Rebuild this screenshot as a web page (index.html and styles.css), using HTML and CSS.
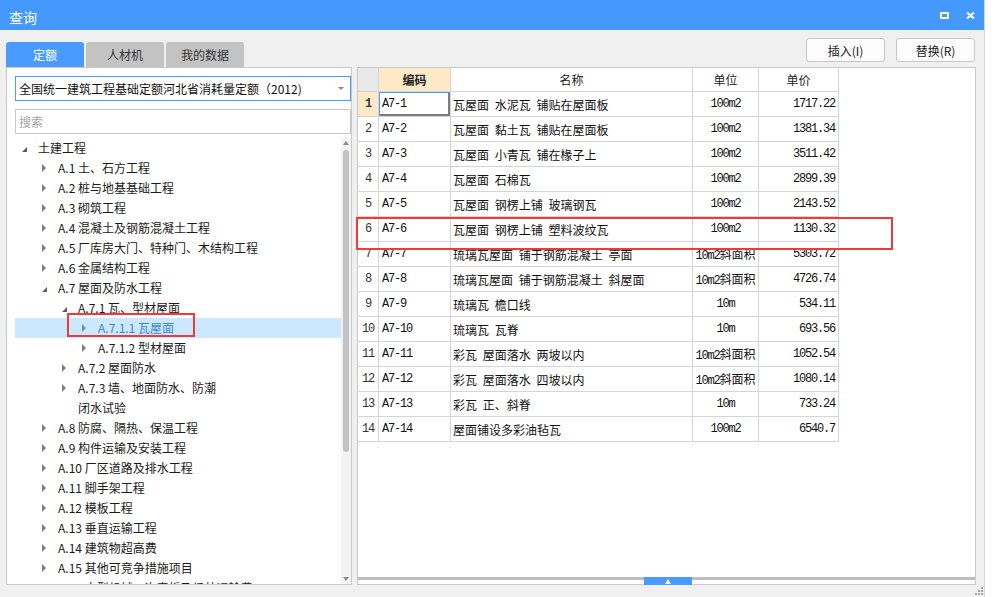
FILE: index.html
```html
<!DOCTYPE html>
<html lang="zh-CN">
<head>
<meta charset="utf-8">
<title>查询</title>
<link rel="stylesheet" href="styles.css">
</head>
<body>
<div class="win">
  <div class="titlebar">
    <span class="title">查询</span>
    <div class="tb-icons">
      <svg class="tb-ico" width="9" height="7" viewBox="0 0 9 7"><rect x="1" y="1" width="7" height="5" fill="none" stroke="#fff" stroke-width="2"/></svg>
      <svg class="tb-ico" width="9" height="7" viewBox="0 0 9 7"><path d="M1 0.5 L8 6.5 M8 0.5 L1 6.5" stroke="#fff" stroke-width="2"/></svg>
    </div>
  </div>

  <div class="main">
    <div class="left">
      <div class="tabs">
        <div class="tab active">定额</div>
        <div class="tab">人材机</div>
        <div class="tab">我的数据</div>
      </div>
      <div class="lpanel">
        <div class="select"><span>全国统一建筑工程基础定额河北省消耗量定额（2012)</span><i class="caret"></i></div>
        <div class="search">搜索</div>
        <div class="treewrap">
          <div class="tree">
            <div class="row l0 open"><i class="tw"></i><span>土建工程</span></div>
            <div class="row l1"><i class="tw"></i><span>A.1 土、石方工程</span></div>
            <div class="row l1"><i class="tw"></i><span>A.2 桩与地基基础工程</span></div>
            <div class="row l1"><i class="tw"></i><span>A.3 砌筑工程</span></div>
            <div class="row l1"><i class="tw"></i><span>A.4 混凝土及钢筋混凝土工程</span></div>
            <div class="row l1"><i class="tw"></i><span>A.5 厂库房大门、特种门、木结构工程</span></div>
            <div class="row l1"><i class="tw"></i><span>A.6 金属结构工程</span></div>
            <div class="row l1 open"><i class="tw"></i><span>A.7 屋面及防水工程</span></div>
            <div class="row l2 open"><i class="tw"></i><span>A.7.1 瓦、型材屋面</span></div>
            <div class="row l3 sel"><i class="tw"></i><span>A.7.1.1 瓦屋面</span></div>
            <div class="row l3"><i class="tw"></i><span>A.7.1.2 型材屋面</span></div>
            <div class="row l2"><i class="tw"></i><span>A.7.2 屋面防水</span></div>
            <div class="row l2 wrap"><i class="tw"></i><span>A.7.3 墙、地面防水、防潮<br>闭水试验</span></div>
            <div class="row l1"><i class="tw"></i><span>A.8 防腐、隔热、保温工程</span></div>
            <div class="row l1"><i class="tw"></i><span>A.9 构件运输及安装工程</span></div>
            <div class="row l1"><i class="tw"></i><span>A.10 厂区道路及排水工程</span></div>
            <div class="row l1"><i class="tw"></i><span>A.11 脚手架工程</span></div>
            <div class="row l1"><i class="tw"></i><span>A.12 模板工程</span></div>
            <div class="row l1"><i class="tw"></i><span>A.13 垂直运输工程</span></div>
            <div class="row l1"><i class="tw"></i><span>A.14 建筑物超高费</span></div>
            <div class="row l1"><i class="tw"></i><span>A.15 其他可竞争措施项目</span></div>
            <div class="row l1"><i class="tw"></i><span>A.16 大型机械一次安拆及场外运输费</span></div>
          </div>
          <div class="vscroll">
            <i class="arr-up"></i>
            <div class="thumb"></div>
            <i class="arr-down"></i>
          </div>
          <div class="redbox-tree"></div>
        </div>
      </div>
    </div>

    <div class="right">
      <div class="btnbar">
        <button class="btn">插入(I)</button>
        <button class="btn">替换(R)</button>
      </div>
      <div class="rpanel">
        <div class="grid-area">
          <div class="gt">
            <div class="c hd corner"></div>
            <div class="c hd act">编码</div>
            <div class="c hd">名称</div>
            <div class="c hd">单位</div>
            <div class="c hd">单价</div>

            <div class="c rn act">1</div><div class="c code focus">A7-1</div><div class="c name">瓦屋面 水泥瓦 铺贴在屋面板</div><div class="c unit"><span>100m2</span></div><div class="c price">1717.22</div>
            <div class="c rn">2</div><div class="c code">A7-2</div><div class="c name">瓦屋面 黏土瓦 铺贴在屋面板</div><div class="c unit"><span>100m2</span></div><div class="c price">1381.34</div>
            <div class="c rn">3</div><div class="c code">A7-3</div><div class="c name">瓦屋面 小青瓦 铺在椽子上</div><div class="c unit"><span>100m2</span></div><div class="c price">3511.42</div>
            <div class="c rn">4</div><div class="c code">A7-4</div><div class="c name">瓦屋面 石棉瓦</div><div class="c unit"><span>100m2</span></div><div class="c price">2899.39</div>
            <div class="c rn">5</div><div class="c code">A7-5</div><div class="c name">瓦屋面 钢楞上铺 玻璃钢瓦</div><div class="c unit"><span>100m2</span></div><div class="c price">2143.52</div>
            <div class="c rn">6</div><div class="c code">A7-6</div><div class="c name">瓦屋面 钢楞上铺 塑料波纹瓦</div><div class="c unit"><span>100m2</span></div><div class="c price">1130.32</div>
            <div class="c rn">7</div><div class="c code">A7-7</div><div class="c name">琉璃瓦屋面 铺于钢筋混凝土 亭面</div><div class="c unit"><span>10m2<span class="cj">斜面积</span></span></div><div class="c price">5303.72</div>
            <div class="c rn">8</div><div class="c code">A7-8</div><div class="c name">琉璃瓦屋面 铺于钢筋混凝土 斜屋面</div><div class="c unit"><span>10m2<span class="cj">斜面积</span></span></div><div class="c price">4726.74</div>
            <div class="c rn">9</div><div class="c code">A7-9</div><div class="c name">琉璃瓦 檐口线</div><div class="c unit"><span>10m</span></div><div class="c price">534.11</div>
            <div class="c rn">10</div><div class="c code">A7-10</div><div class="c name">琉璃瓦 瓦脊</div><div class="c unit"><span>10m</span></div><div class="c price">693.56</div>
            <div class="c rn">11</div><div class="c code">A7-11</div><div class="c name">彩瓦 屋面落水 两坡以内</div><div class="c unit"><span>10m2<span class="cj">斜面积</span></span></div><div class="c price">1052.54</div>
            <div class="c rn">12</div><div class="c code">A7-12</div><div class="c name">彩瓦 屋面落水 四坡以内</div><div class="c unit"><span>10m2<span class="cj">斜面积</span></span></div><div class="c price">1080.14</div>
            <div class="c rn">13</div><div class="c code">A7-13</div><div class="c name">彩瓦 正、斜脊</div><div class="c unit"><span>10m</span></div><div class="c price">733.24</div>
            <div class="c rn">14</div><div class="c code">A7-14</div><div class="c name">屋面铺设多彩油毡瓦</div><div class="c unit"><span>100m2</span></div><div class="c price">6540.7</div>
          </div>
        </div>
        <div class="hbar"><div class="handle"><i class="handle-arr"></i></div></div>
        <div class="hbar-foot"></div>
        <div class="redbox-row"></div>
      </div>
    </div>
  </div>

  <svg class="grip" width="8" height="8" viewBox="0 0 8 8">
    <rect x="6" y="0" width="2" height="2" fill="#a6a6a6"/>
    <rect x="3" y="3" width="2" height="2" fill="#a6a6a6"/>
    <rect x="6" y="3" width="2" height="2" fill="#a6a6a6"/>
    <rect x="0" y="6" width="2" height="2" fill="#a6a6a6"/>
    <rect x="3" y="6" width="2" height="2" fill="#a6a6a6"/>
    <rect x="6" y="6" width="2" height="2" fill="#a6a6a6"/>
  </svg>
</div>
</body>
</html>
```

FILE: styles.css
```css
* { box-sizing: border-box; }
html, body { margin: 0; padding: 0; background: #ffffff; }
body {
  font-family: "Noto Sans CJK SC", "Noto Sans", sans-serif;
  font-size: 12px;
  color: #1e1e1e;
}

.win {
  width: 985px;
  height: 597px;
  background: #f0f0f0;
  position: relative;
  overflow: hidden;
  border-right: 1px solid #d6d6d6;
}

/* title bar */
.titlebar {
  height: 30px;
  background: #4499fe;
  color: #fff;
  display: flex;
  align-items: center;
  padding: 0 9px 0 9px;
}
.title { font-size: 14px; line-height: 30px; padding-top: 3px; }
.tb-icons { margin-left: auto; display: flex; align-items: center; gap: 17px; padding-top: 1px; }
.tb-ico { display: block; }

/* layout */
.main { display: flex; padding-left: 6px; }
.left { width: 346px; display: flex; flex-direction: column; }
.right { width: 619px; margin-left: 5px; display: flex; flex-direction: column; }

/* tabs */
.tabs { display: flex; gap: 2px; margin-top: 12px; height: 25px; }
.tab {
  width: 78px; height: 25px;
  border-radius: 3px 3px 0 0;
  background: #c3c3c3;
  color: #333;
  display: flex; align-items: center; justify-content: center;
  font-size: 12px;
}
.tab.active { background: #4a9bff; color: #fff; }

/* left panel */
.lpanel {
  height: 518px;
  background: #fff;
  border: 1px solid #c9c9c9;
  padding: 8px 0 0 8px;
  display: flex; flex-direction: column;
}
.select {
  height: 25px;
  border: 1px solid #4a9bff;
  display: flex; align-items: center;
  padding-left: 3px;
  color: #111;
  white-space: nowrap;
}
.caret {
  margin-left: auto; margin-right: 6px;
  width: 0; height: 0;
  border-top: 3px solid #8a8a8a;
  border-left: 3px solid transparent;
  border-right: 3px solid transparent;
}
.search {
  height: 25px;
  margin-top: 8px;
  border: 1px solid #c8c8c8;
  color: #a3a3a3;
  padding-left: 3px;
  display: flex; align-items: center;
}

.treewrap { margin-top: 4px; flex: 1; display: flex; position: relative; overflow: hidden; }
.tree { flex: 1; overflow: hidden; }
.row {
  height: 20px; line-height: 20px;
  display: flex; align-items: flex-start;
  white-space: nowrap;
  color: #1a1a1a;
}
.row.l1 { padding-left: 20px; }
.row.l2 { padding-left: 40px; }
.row.l3 { padding-left: 60px; }
.row.wrap { height: 40px; }
.row.sel { background: #cce8ff; color: #3b84d8; }
.tw { width: 23px; height: 20px; flex: none; position: relative; }
.tw::before {
  content: ""; position: absolute; left: 7px; top: 6px;
  width: 0; height: 0;
  border-left: 4px solid #7f7f7f;
  border-top: 4px solid transparent;
  border-bottom: 4px solid transparent;
}
.row.open .tw::before {
  left: 7px; top: 9px;
  border-top: 0;
  border-left: 5px solid transparent;
  border-bottom: 5px solid #5e5e5e;
}
.row.sel .tw::before { border-left-color: #6f8fb0; }

.vscroll {
  width: 10px; flex: none;
  background: #f3f3f3;
  display: flex; flex-direction: column; align-items: center;
}
.arr-up {
  margin-top: 3px;
  width: 0; height: 0;
  border-bottom: 4px solid #8a8a8a;
  border-left: 3.5px solid transparent;
  border-right: 3.5px solid transparent;
}
.thumb { margin-top: 5px; width: 6px; height: 302px; border-radius: 3px; background: #c2c2c2; }
.arr-down {
  margin-top: auto; margin-bottom: 3px;
  width: 0; height: 0;
  border-top: 4px solid #8a8a8a;
  border-left: 3.5px solid transparent;
  border-right: 3.5px solid transparent;
}
.redbox-tree {
  position: absolute; left: 52px; top: 175px;
  width: 128px; height: 24px;
  border: 2px solid #ee3a3a;
  pointer-events: none;
}

/* right side */
.btnbar { display: flex; justify-content: flex-end; gap: 11px; padding-top: 8px; padding-right: 1px; height: 37px; }
.btn {
  width: 79px; height: 24px;
  border: 1px solid #c6c6c6; border-radius: 3px;
  background: #fcfcfc;
  font-family: inherit; font-size: 12px; color: #222;
  padding: 0;
}

.rpanel {
  height: 518px;
  border: 1px solid #c9c9c9;
  background: #fff;
  position: relative;
  display: flex; flex-direction: column;
}
.grid-area { flex: 1; }
.hbar { height: 3px; background: #bdbdbd; position: relative; }
.handle {
  position: absolute; left: 286px; top: 0;
  width: 48px; height: 8px;
  background: #4a9bff;
  display: flex; align-items: center; justify-content: center;
}
.handle-arr {
  width: 0; height: 0;
  border-bottom: 5px solid #fff;
  border-left: 3px solid transparent;
  border-right: 3px solid transparent;
}
.hbar-foot { height: 4px; }
.redbox-row {
  position: absolute; left: -2px; top: 149px;
  width: 537px; height: 33px;
  border: 2px solid #f03a3a;
  pointer-events: none;
}

/* grid table */
.gt {
  display: grid;
  grid-template-columns: 21px 72px 242px 66px 80px;
  grid-template-rows: 24px;
  grid-auto-rows: 25px;
  width: 481px;
}
.c {
  border-right: 1px solid #d5d5d5;
  border-bottom: 1px solid #d5d5d5;
  display: flex; align-items: center;
  white-space: nowrap; overflow: hidden;
  color: #111;
}
.hd { justify-content: center; font-size: 12px; color: #222; }
.hd.corner { background: #e9e9e9; }
.hd.act { background: #fde8c8; font-weight: bold; }
.rn, .code, .price, .unit {
  font-family: "Liberation Mono", monospace;
  font-size: 12px;
  letter-spacing: -1.2px;
}
.rn { justify-content: center; color: #333; }
.rn.act { background: #fde8c8; font-weight: bold; }
.code { padding-left: 3px; }
.name { padding-left: 2px; word-spacing: 3px; font-size: 12px; }
.unit { justify-content: center; }
.cj { font-family: "Noto Sans CJK SC", sans-serif; font-size: 12px; letter-spacing: 0; }
.price { justify-content: flex-end; padding-right: 3px; }
.focus { box-shadow: inset 1px 1px 0 #4a9bff, inset -2px -2px 0 #7d7d7d; }

.grip { position: absolute; right: 1px; bottom: 2px; }
```
